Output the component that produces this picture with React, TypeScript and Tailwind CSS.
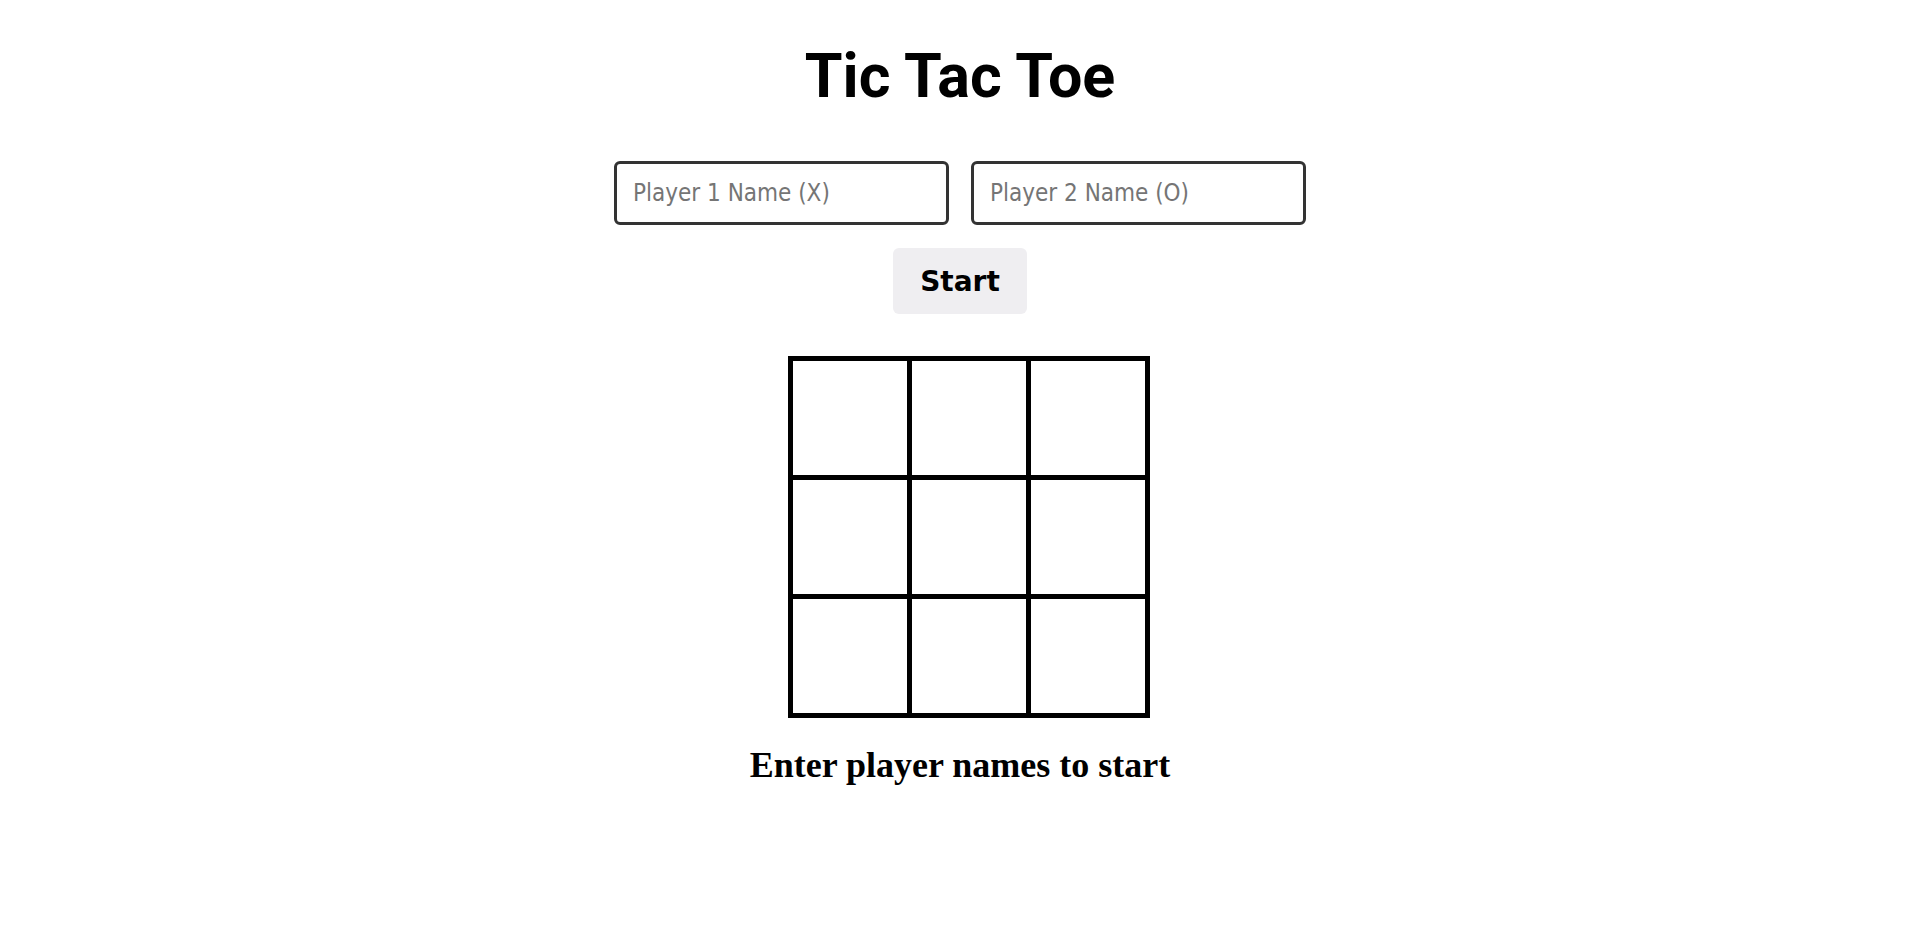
import { useState } from 'react';

type Cell = 'X' | 'O' | null;

const App: React.FC = () => {
  const [board, setBoard] = useState<Cell[]>(Array(9).fill(null));
  const [p1, setP1] = useState('');
  const [p2, setP2] = useState('');
  const [started, setStarted] = useState(false);
  const [turn, setTurn] = useState<'X' | 'O'>('X');

  const handleClick = (i: number) => {
    if (!started || board[i]) return;
    const next = [...board];
    next[i] = turn;
    setBoard(next);
    setTurn(turn === 'X' ? 'O' : 'X');
  };

  const status = started
    ? `${turn === 'X' ? p1 : p2}'s turn (${turn})`
    : 'Enter player names to start';

  return (
    <div className="min-h-screen bg-white flex flex-col items-center pt-[46px]">
      <h1 className="font-['Roboto',sans-serif] font-bold text-[61px] leading-[60px] text-black">
        Tic Tac Toe
      </h1>

      <div className="flex gap-[22px] mt-[55px]">
        <input
          value={p1}
          onChange={(e) => setP1(e.target.value)}
          placeholder="Player 1 Name (X)"
          className="w-[335px] border-[3px] border-[#333] rounded-[6px] px-[16px] py-[16px] font-['DejaVu_Sans_Condensed','DejaVu_Sans',sans-serif] text-[24px] leading-[26px] placeholder:text-[#757575] outline-none"
        />
        <input
          value={p2}
          onChange={(e) => setP2(e.target.value)}
          placeholder="Player 2 Name (O)"
          className="w-[335px] border-[3px] border-[#333] rounded-[6px] px-[16px] py-[16px] font-['DejaVu_Sans_Condensed','DejaVu_Sans',sans-serif] text-[24px] leading-[26px] placeholder:text-[#757575] outline-none"
        />
      </div>

      <button
        onClick={() => p1 && p2 && setStarted(true)}
        className="mt-[23px] bg-[#efeef1] rounded-[6px] w-[134px] pt-[19px] pb-[17px] font-['DejaVu_Sans',sans-serif] font-bold text-[28px] leading-[30px] text-black"
      >
        Start
      </button>

      <div className="mt-[42px] ml-[18px] grid grid-cols-3 gap-[5px] p-[5px] bg-black">
        {board.map((cell, i) => (
          <div
            key={i}
            onClick={() => handleClick(i)}
            className="w-[114px] h-[114px] bg-white flex items-center justify-center font-['Roboto',sans-serif] font-bold text-[64px]"
          >
            {cell}
          </div>
        ))}
      </div>

      <p className="mt-[29px] font-['Liberation_Serif',serif] font-bold text-[36px] leading-none text-black">
        {status}
      </p>
    </div>
  );
};

export default App;
